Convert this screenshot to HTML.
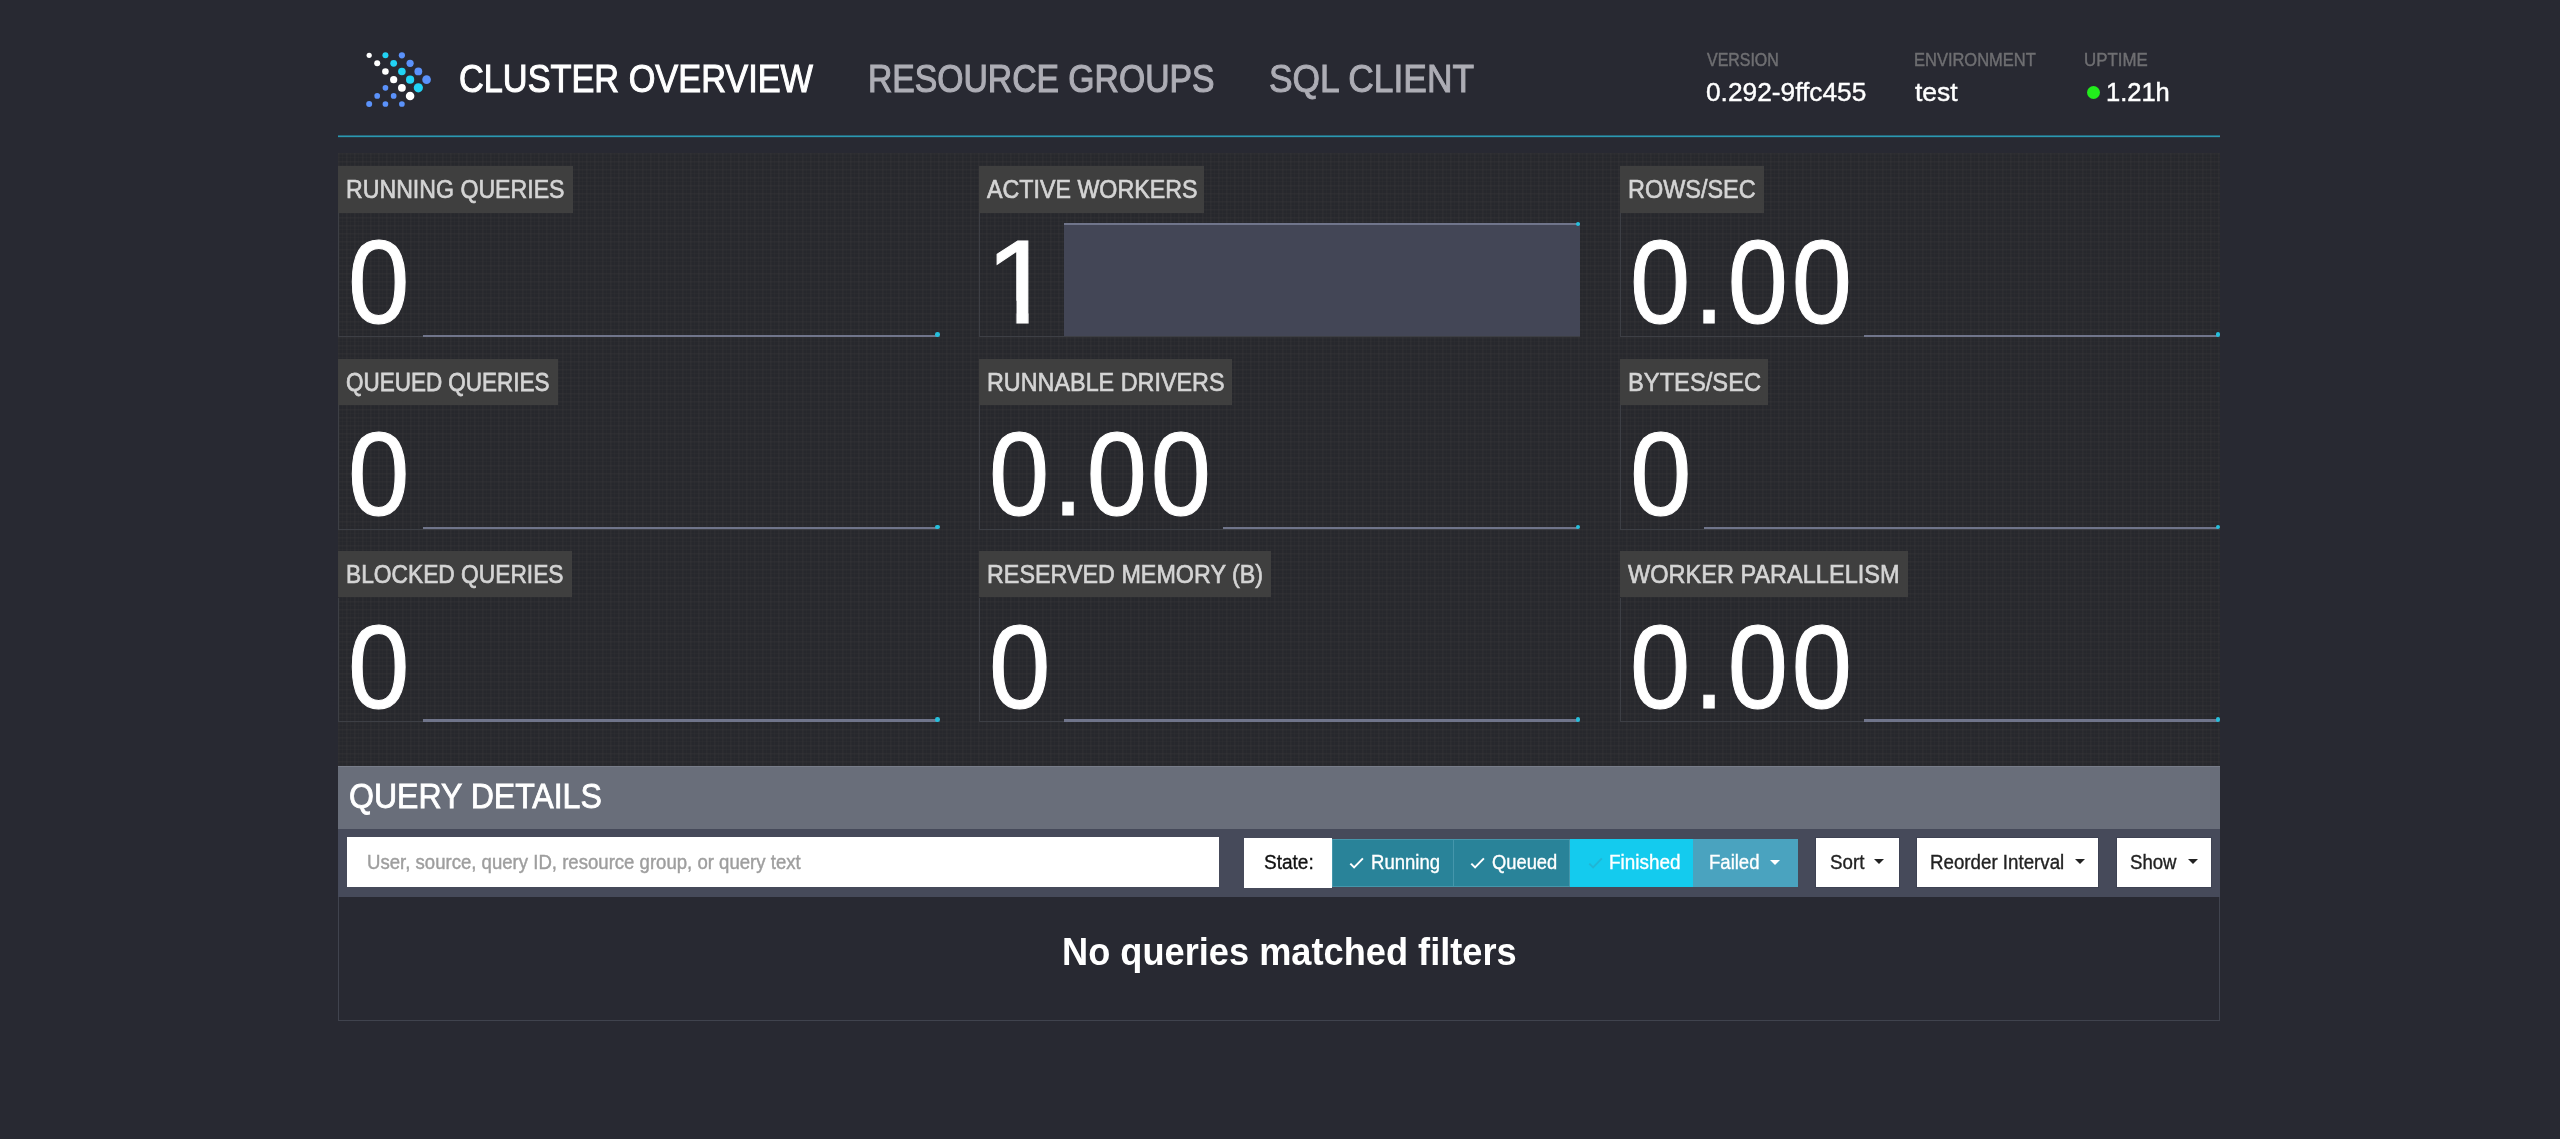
<!DOCTYPE html>
<html><head><meta charset="utf-8"><title>Cluster Overview - Presto</title>
<style>
*{box-sizing:border-box;margin:0;padding:0}
html,body{width:2560px;height:1139px;overflow:hidden;background:#282932;font-family:"Liberation Sans",sans-serif;}
#page{position:relative;width:2560px;height:1139px;overflow:hidden;background:#282932}
.a{position:absolute}
.t{position:absolute;white-space:pre;line-height:1;transform-origin:0 0;font-family:"Liberation Sans",sans-serif;}
.navline{left:338px;top:135px;width:1882px;height:3px;background:linear-gradient(to bottom, rgba(42,152,177,0.55) 0, rgba(42,152,177,0.55) 1px, #2a98b1 1px, #2a98b1 2px, rgba(42,152,177,0.15) 2px, rgba(42,152,177,0.15) 3px)}
.grid{left:338px;top:153px;width:1882px;height:613px;background-color:#27282d;
 background-image:linear-gradient(to right, rgba(255,255,255,0.012) 1px, transparent 1px),linear-gradient(to bottom, rgba(255,255,255,0.012) 1px, transparent 1px),linear-gradient(to right, rgba(255,255,255,0.012) 2px, transparent 2px),linear-gradient(to bottom, rgba(255,255,255,0.012) 2px, transparent 2px);background-size:4px 4px,4px 4px,8px 8px,8px 8px;}
.lab{height:46px;background:#3f3f3f}
.box{border-left:1px solid #3d3f45;border-bottom:1px solid #3d3f45;width:602px;height:125px}
.sl{height:2px;background:#70758b}
.dot{width:4.6px;height:4.6px;border-radius:50%;background:#25bfdc}
.qh{left:338px;top:766px;width:1882px;height:63px;background:#696e7a;border-top:1px solid #787d89}
.tb{left:338px;top:829px;width:1882px;height:68px;background:#464a5a}
.res{left:338px;top:897px;width:1882px;height:124px;border:1px solid #40434e;border-top:none}
.inp{left:347px;top:837px;width:872px;height:50px;background:#fff}
.wb{background:#fff;box-shadow:0 0 0 1px #3e4253;top:838px;height:49px}
.caret{width:0;height:0;border-left:5.3px solid transparent;border-right:5.3px solid transparent;border-top:5.2px solid #222}
</style></head>
<body><div id="page">
<div class="a navline"></div>
<svg class="a" style="left:356px;top:40px" width="90" height="75" viewBox="356 40 90 75"><circle cx="369.17" cy="55.34" r="2.6" fill="#ffffff"/><circle cx="385.43" cy="55.34" r="3.0" fill="#22d3f5"/><circle cx="401.89" cy="55.34" r="3.1" fill="#5b92fb"/><circle cx="377.2" cy="63.37" r="3.0" fill="#ffffff"/><circle cx="393.66" cy="63.37" r="3.4" fill="#22d3f5"/><circle cx="410.1" cy="63.37" r="3.6" fill="#5b92fb"/><circle cx="385.43" cy="71.47" r="3.3" fill="#ffffff"/><circle cx="401.89" cy="71.47" r="3.8" fill="#22d3f5"/><circle cx="418.34" cy="71.47" r="3.9" fill="#5b92fb"/><circle cx="393.66" cy="79.63" r="3.6" fill="#ffffff"/><circle cx="410.1" cy="79.63" r="4.1" fill="#22d3f5"/><circle cx="426.57" cy="79.63" r="4.3" fill="#5b92fb"/><circle cx="385.43" cy="87.86" r="2.85" fill="#5b92fb"/><circle cx="401.89" cy="87.86" r="3.9" fill="#ffffff"/><circle cx="418.34" cy="87.86" r="4.6" fill="#22d3f5"/><circle cx="377.2" cy="95.96" r="2.85" fill="#5b92fb"/><circle cx="393.66" cy="95.96" r="2.85" fill="#5b92fb"/><circle cx="410.1" cy="95.96" r="4.3" fill="#ffffff"/><circle cx="369.17" cy="104.0" r="3.0" fill="#5b92fb"/><circle cx="385.43" cy="104.0" r="2.85" fill="#5b92fb"/><circle cx="401.89" cy="104.0" r="2.85" fill="#5b92fb"/></svg>
<div class="a" style="left:2086.7px;top:86.2px;width:13.2px;height:13.2px;border-radius:50%;background:#22ec1c"></div>
<div class="a grid"></div>
<div class="a box" style="left:338.4px;top:212.7px;width:601.6px;height:124.5px"></div>
<div class="a lab" style="left:338.4px;top:166.3px;width:234.3px;height:46.4px"></div>
<div class="a sl" style="left:422.7px;top:334.5px;width:515.3px;height:2.4px"></div>
<div class="a dot" style="left:935.2px;top:332.3px"></div>
<div class="a box" style="left:338.4px;top:405.1px;width:601.6px;height:124.5px"></div>
<div class="a lab" style="left:338.4px;top:358.7px;width:219.6px;height:46.4px"></div>
<div class="a sl" style="left:422.7px;top:526.9px;width:515.3px;height:2.4px"></div>
<div class="a dot" style="left:935.2px;top:524.7px"></div>
<div class="a box" style="left:338.4px;top:597.5px;width:601.6px;height:124.5px"></div>
<div class="a lab" style="left:338.4px;top:551.1px;width:233.4px;height:46.4px"></div>
<div class="a sl" style="left:422.7px;top:719.3px;width:515.3px;height:2.4px"></div>
<div class="a dot" style="left:935.2px;top:717.1px"></div>
<div class="a box" style="left:979.2px;top:212.7px;width:601.1px;height:124.5px"></div>
<div class="a lab" style="left:979.2px;top:166.3px;width:225.2px;height:46.4px"></div>
<div class="a" style="left:1063.5px;top:223.0px;width:516.8px;height:112.6px;background:#434656;border-top:2.2px solid #70758b"></div>
<div class="a dot" style="left:1575.5px;top:221.5px"></div>
<div class="a box" style="left:979.2px;top:405.1px;width:601.1px;height:124.5px"></div>
<div class="a lab" style="left:979.2px;top:358.7px;width:252.9px;height:46.4px"></div>
<div class="a sl" style="left:1223.4px;top:526.9px;width:354.9px;height:2.4px"></div>
<div class="a dot" style="left:1575.5px;top:524.7px"></div>
<div class="a box" style="left:979.2px;top:597.5px;width:601.1px;height:124.5px"></div>
<div class="a lab" style="left:979.2px;top:551.1px;width:292.0px;height:46.4px"></div>
<div class="a sl" style="left:1063.5px;top:719.3px;width:514.8px;height:2.4px"></div>
<div class="a dot" style="left:1575.5px;top:717.1px"></div>
<div class="a box" style="left:1620.0px;top:212.7px;width:600.3px;height:124.5px"></div>
<div class="a lab" style="left:1620.0px;top:166.3px;width:143.8px;height:46.4px"></div>
<div class="a sl" style="left:1864.2px;top:334.5px;width:354.1px;height:2.4px"></div>
<div class="a dot" style="left:2215.5px;top:332.3px"></div>
<div class="a box" style="left:1620.0px;top:405.1px;width:600.3px;height:124.5px"></div>
<div class="a lab" style="left:1620.0px;top:358.7px;width:148.4px;height:46.4px"></div>
<div class="a sl" style="left:1704.3px;top:526.9px;width:514.0px;height:2.4px"></div>
<div class="a dot" style="left:2215.5px;top:524.7px"></div>
<div class="a box" style="left:1620.0px;top:597.5px;width:600.3px;height:124.5px"></div>
<div class="a lab" style="left:1620.0px;top:551.1px;width:287.8px;height:46.4px"></div>
<div class="a sl" style="left:1864.2px;top:719.3px;width:354.1px;height:2.4px"></div>
<div class="a dot" style="left:2215.5px;top:717.1px"></div>
<div class="a qh"></div><div class="a tb"></div><div class="a res"></div><div class="a inp"></div>
<div class="a" style="left:1244px;top:838px;width:88px;height:50px;background:#fff"></div>
<div class="a" style="left:1332px;top:839px;width:122px;height:48px;background:#298399;border:1px solid #4596ab"></div>
<div class="a" style="left:1454px;top:839px;width:116px;height:48px;background:#298399;border:1px solid #4596ab;border-left:none"></div>
<div class="a" style="left:1570px;top:839px;width:123px;height:48px;background:#14cbee"></div>
<div class="a" style="left:1693px;top:839px;width:105px;height:48px;background:#4aa3bf"></div>
<div class="a wb" style="left:1816px;width:83px"></div>
<div class="a wb" style="left:1917px;width:181px"></div>
<div class="a wb" style="left:2117px;width:94px"></div>
<div class="a caret" style="left:1874.3px;top:859.2px;border-top-color:#222"></div>
<div class="a caret" style="left:2074.7px;top:859.2px;border-top-color:#222"></div>
<div class="a caret" style="left:2187.6px;top:859.2px;border-top-color:#222"></div>
<div class="a caret" style="left:1769.7px;top:860px;border-top-color:#fff"></div>
<svg class="a" style="left:1349px;top:857px;opacity:1" width="16" height="13" viewBox="0 0 16 13"><path d="M1.3 6.6 L5.1 10.4 L13.9 1.4" fill="none" stroke="#fff" stroke-width="2"/></svg>
<svg class="a" style="left:1470.3px;top:857px;opacity:1" width="16" height="13" viewBox="0 0 16 13"><path d="M1.3 6.6 L5.1 10.4 L13.9 1.4" fill="none" stroke="#fff" stroke-width="2"/></svg>
<svg class="a" style="left:1587.6px;top:857px;opacity:0.55" width="16" height="13" viewBox="0 0 16 13"><path d="M1.3 6.6 L5.1 10.4 L13.9 1.4" fill="none" stroke="#2aa5c2" stroke-width="2"/></svg>
<span class="t" style="left:458.64px;top:58.71px;font-size:39.68px;color:#ffffff;font-weight:400;-webkit-text-stroke:1.1px;transform:translateZ(0) scaleX(0.8649)">CLUSTER OVERVIEW</span>
<span class="t" style="left:867.75px;top:58.71px;font-size:39.68px;color:#adadb5;font-weight:400;-webkit-text-stroke:1.16px;transform:translateZ(0) scaleX(0.8495)">RESOURCE GROUPS</span>
<span class="t" style="left:1268.91px;top:58.71px;font-size:39.68px;color:#adadb5;font-weight:400;-webkit-text-stroke:0.99px;transform:translateZ(0) scaleX(0.8917)">SQL CLIENT</span>
<span class="t" style="left:1707.00px;top:50.85px;font-size:18.19px;color:#6f6f72;font-weight:400;-webkit-text-stroke:0.49px;transform:translateZ(0) scaleX(0.8765)">VERSION</span>
<span class="t" style="left:1706.01px;top:78.85px;font-size:26.46px;color:#ffffff;font-weight:400;-webkit-text-stroke:0.42px;transform:translateZ(0) scaleX(0.9938)">0.292-9ffc455</span>
<span class="t" style="left:1914.49px;top:50.85px;font-size:18.19px;color:#6f6f72;font-weight:400;-webkit-text-stroke:0.43px;transform:translateZ(0) scaleX(0.9060)">ENVIRONMENT</span>
<span class="t" style="left:1915.00px;top:78.85px;font-size:26.46px;color:#ffffff;font-weight:400;-webkit-text-stroke:0.42px;transform:translateZ(0) scaleX(1.0000)">test</span>
<span class="t" style="left:2084.47px;top:50.85px;font-size:18.19px;color:#6f6f72;font-weight:400;-webkit-text-stroke:0.41px;transform:translateZ(0) scaleX(0.9269)">UPTIME</span>
<span class="t" style="left:2105.57px;top:78.85px;font-size:26.46px;color:#ffffff;font-weight:400;-webkit-text-stroke:0.51px;transform:translateZ(0) scaleX(0.9635)">1.21h</span>
<span class="t" style="left:346.03px;top:176.24px;font-size:26.3px;color:#d4d4d4;font-weight:400;-webkit-text-stroke:0.7px;transform:translateZ(0) scaleX(0.8799)">RUNNING QUERIES</span>
<span class="t" style="left:345.94px;top:368.64px;font-size:26.3px;color:#d4d4d4;font-weight:400;-webkit-text-stroke:0.76px;transform:translateZ(0) scaleX(0.8544)">QUEUED QUERIES</span>
<span class="t" style="left:346.06px;top:561.04px;font-size:26.3px;color:#d4d4d4;font-weight:400;-webkit-text-stroke:0.73px;transform:translateZ(0) scaleX(0.8653)">BLOCKED QUERIES</span>
<span class="t" style="left:986.60px;top:176.24px;font-size:26.3px;color:#d4d4d4;font-weight:400;-webkit-text-stroke:0.7px;transform:translateZ(0) scaleX(0.8838)">ACTIVE WORKERS</span>
<span class="t" style="left:986.82px;top:368.64px;font-size:26.3px;color:#d4d4d4;font-weight:400;-webkit-text-stroke:0.68px;transform:translateZ(0) scaleX(0.8882)">RUNNABLE DRIVERS</span>
<span class="t" style="left:986.82px;top:561.04px;font-size:26.3px;color:#d4d4d4;font-weight:400;-webkit-text-stroke:0.69px;transform:translateZ(0) scaleX(0.8872)">RESERVED MEMORY (B)</span>
<span class="t" style="left:1627.61px;top:176.24px;font-size:26.3px;color:#d4d4d4;font-weight:400;-webkit-text-stroke:0.66px;transform:translateZ(0) scaleX(0.8919)">ROWS/SEC</span>
<span class="t" style="left:1627.59px;top:368.64px;font-size:26.3px;color:#d4d4d4;font-weight:400;-webkit-text-stroke:0.65px;transform:translateZ(0) scaleX(0.9017)">BYTES/SEC</span>
<span class="t" style="left:1628.40px;top:561.04px;font-size:26.3px;color:#d4d4d4;font-weight:400;-webkit-text-stroke:0.67px;transform:translateZ(0) scaleX(0.8949)">WORKER PARALLELISM</span>
<span class="t" style="left:348.10px;top:221.84px;font-size:119.5px;color:#ffffff;font-weight:400;-webkit-text-stroke:1.1px;transform:translateZ(0) scaleX(0.9241)">0</span>
<span class="t" style="left:348.10px;top:414.24px;font-size:119.5px;color:#ffffff;font-weight:400;-webkit-text-stroke:1.1px;transform:translateZ(0) scaleX(0.9241)">0</span>
<span class="t" style="left:348.10px;top:606.64px;font-size:119.5px;color:#ffffff;font-weight:400;-webkit-text-stroke:1.1px;transform:translateZ(0) scaleX(0.9241)">0</span>
<span class="t" style="left:984.72px;top:221.84px;font-size:119.5px;color:#ffffff;-webkit-text-stroke:1px;clip-path:polygon(0 0,41.11px 0,41.11px 119.5px,29.55px 119.5px,29.55px 78.9px,0 78.9px);transform:translateZ(0) scaleX(1.06)">1</span>
<span class="t" style="left:988.78px;top:414.24px;font-size:119.5px;color:#ffffff;font-weight:400;-webkit-text-stroke:1.1px;letter-spacing:4.23px;transform:translateZ(0) scaleX(0.9050)">0.00</span>
<span class="t" style="left:988.90px;top:606.64px;font-size:119.5px;color:#ffffff;font-weight:400;-webkit-text-stroke:1.1px;transform:translateZ(0) scaleX(0.9241)">0</span>
<span class="t" style="left:1629.58px;top:221.84px;font-size:119.5px;color:#ffffff;font-weight:400;-webkit-text-stroke:1.1px;letter-spacing:4.23px;transform:translateZ(0) scaleX(0.9050)">0.00</span>
<span class="t" style="left:1629.70px;top:414.24px;font-size:119.5px;color:#ffffff;font-weight:400;-webkit-text-stroke:1.1px;transform:translateZ(0) scaleX(0.9241)">0</span>
<span class="t" style="left:1629.58px;top:606.64px;font-size:119.5px;color:#ffffff;font-weight:400;-webkit-text-stroke:1.1px;letter-spacing:4.23px;transform:translateZ(0) scaleX(0.9050)">0.00</span>
<span class="t" style="left:349.10px;top:779.36px;font-size:35.6px;color:#ffffff;font-weight:400;-webkit-text-stroke:0.87px;transform:translateZ(0) scaleX(0.9004)">QUERY DETAILS</span>
<span class="t" style="left:366.86px;top:852.71px;font-size:19.84px;color:#9e9e9e;font-weight:400;-webkit-text-stroke:0.43px;transform:translateZ(0) scaleX(0.9370)">User, source, query ID, resource group, or query text</span>
<span class="t" style="left:1061.70px;top:932.71px;font-size:38.03px;color:#ffffff;font-weight:700;-webkit-text-stroke:0px;transform:translateZ(0) scaleX(0.9523)">No queries matched filters</span>
<span class="t" style="left:1263.64px;top:853.21px;font-size:19.84px;color:#111111;font-weight:400;-webkit-text-stroke:0.35px;transform:translateZ(0) scaleX(0.9592)">State:</span>
<span class="t" style="left:1371.27px;top:853.21px;font-size:19.84px;color:#ffffff;font-weight:400;-webkit-text-stroke:0.35px;transform:translateZ(0) scaleX(0.9347)">Running</span>
<span class="t" style="left:1491.78px;top:853.21px;font-size:19.84px;color:#ffffff;font-weight:400;-webkit-text-stroke:0.35px;transform:translateZ(0) scaleX(0.9246)">Queued</span>
<span class="t" style="left:1608.95px;top:853.21px;font-size:19.84px;color:#ffffff;font-weight:400;-webkit-text-stroke:0.35px;transform:translateZ(0) scaleX(0.9534)">Finished</span>
<span class="t" style="left:1709.27px;top:853.21px;font-size:19.84px;color:#ffffff;font-weight:400;-webkit-text-stroke:0.35px;transform:translateZ(0) scaleX(0.9346)">Failed</span>
<span class="t" style="left:1829.76px;top:852.61px;font-size:19.84px;color:#222222;font-weight:400;-webkit-text-stroke:0.35px;transform:translateZ(0) scaleX(0.9444)">Sort</span>
<span class="t" style="left:1930.16px;top:852.61px;font-size:19.84px;color:#222222;font-weight:400;-webkit-text-stroke:0.35px;transform:translateZ(0) scaleX(0.9443)">Reorder Interval</span>
<span class="t" style="left:2129.96px;top:852.61px;font-size:19.84px;color:#222222;font-weight:400;-webkit-text-stroke:0.35px;transform:translateZ(0) scaleX(0.9388)">Show</span>
</div></body></html>
